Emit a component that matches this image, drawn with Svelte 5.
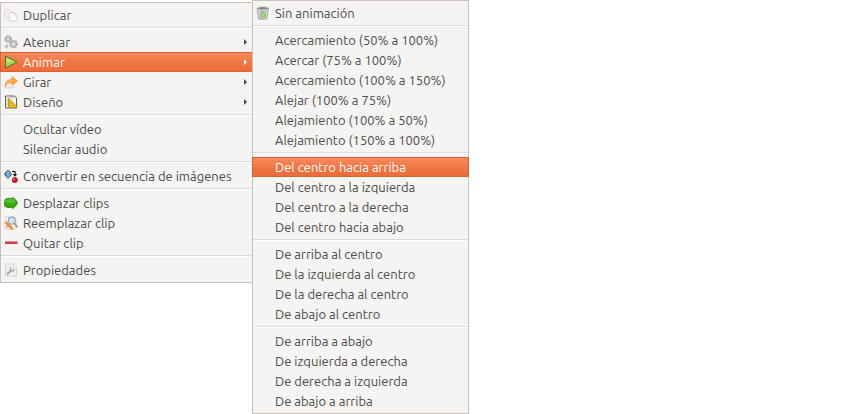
<script lang="ts">
	type Item = { label: string; icon?: string; submenu?: boolean };

	const clipMenu: Item[][] = [
		[{ label: 'Duplicar', icon: 'copy' }],
		[
			{ label: 'Atenuar', icon: 'gears', submenu: true },
			{ label: 'Animar', icon: 'play', submenu: true },
			{ label: 'Girar', icon: 'rotate', submenu: true },
			{ label: 'Diseño', icon: 'layout', submenu: true }
		],
		[{ label: 'Ocultar vídeo' }, { label: 'Silenciar audio' }],
		[{ label: 'Convertir en secuencia de imágenes', icon: 'convert' }],
		[
			{ label: 'Desplazar clips', icon: 'shift' },
			{ label: 'Reemplazar clip', icon: 'replace' },
			{ label: 'Quitar clip', icon: 'remove' }
		],
		[{ label: 'Propiedades', icon: 'properties' }]
	];

	const animateMenu: Item[][] = [
		[{ label: 'Sin animación', icon: 'trash' }],
		[
			{ label: 'Acercamiento (50% a 100%)' },
			{ label: 'Acercar (75% a 100%)' },
			{ label: 'Acercamiento (100% a 150%)' },
			{ label: 'Alejar (100% a 75%)' },
			{ label: 'Alejamiento (100% a 50%)' },
			{ label: 'Alejamiento (150% a 100%)' }
		],
		[
			{ label: 'Del centro hacia arriba' },
			{ label: 'Del centro a la izquierda' },
			{ label: 'Del centro a la derecha' },
			{ label: 'Del centro hacia abajo' }
		],
		[
			{ label: 'De arriba al centro' },
			{ label: 'De la izquierda al centro' },
			{ label: 'De la derecha al centro' },
			{ label: 'De abajo al centro' }
		],
		[
			{ label: 'De arriba a abajo' },
			{ label: 'De izquierda a derecha' },
			{ label: 'De derecha a izquierda' },
			{ label: 'De abajo a arriba' }
		]
	];

	let activeClip = $state('Animar');
	let activeAnimation = $state('Del centro hacia arriba');
</script>

{#snippet glyph(name: string | undefined)}
	<svg class="icon" viewBox="0 0 14 14" aria-hidden="true">
		{#if name === 'copy'}
			<path d="M1 1.500h5l2 2v6H1z" fill="#f4f4f3" stroke="#dedcd9" />
			<path d="M5.500 4.500h5l2.500 2.500v6H5.500z" fill="#fafafa" stroke="#d9d7d4" />
			<path d="M10.500 4.500V7H13" fill="none" stroke="#d9d7d4" />
		{:else if name === 'gears'}
			<circle cx="4" cy="4" r="3" fill="#ccc" stroke="#a2a2a2" stroke-width="1.500" stroke-dasharray="1.600 .8" />
			<circle cx="4" cy="4" r="1.300" fill="#f4f3f1" stroke="#aaa" stroke-width=".6" />
			<circle cx="9.500" cy="9" r="3.600" fill="#ccc" stroke="#a2a2a2" stroke-width="1.500" stroke-dasharray="1.700 .9" />
			<circle cx="9.500" cy="9" r="1.500" fill="#f4f3f1" stroke="#aaa" stroke-width=".6" />
			<circle cx="2.500" cy="11.500" r="1.400" fill="#ddd" stroke="#999" stroke-dasharray="1 .6" />
		{:else if name === 'play'}
			<path d="M1.500 1v12L13 7z" fill="#a9d14a" stroke="#4d7c12" stroke-linejoin="round" />
			<path d="M2.600 3v4.500l6.500-1.100z" fill="#cbe67f" />
		{:else if name === 'rotate'}
			<ellipse cx="6" cy="12.600" rx="5" ry="1" fill="#deddd9" />
			<path d="M1 12C1 7 3 4.500 8 4.500V1.500L13.500 6 8 10.500V7.800C4.500 7.500 2.500 9 1 12z" fill="#fba43c" stroke="#f2933a" stroke-width=".7" stroke-linejoin="round" />
			<path d="M2.500 8.500C4 6.200 6 5.500 9 5.500" fill="none" stroke="#ffc070" stroke-width=".9" />
		{:else if name === 'layout'}
			<path d="M1.500 1h9l2 2v10h-11z" fill="#f6f5ec" stroke="#64645e" />
			<path d="M3 3v8M5.500 2.500h4" stroke="#b7b7b1" stroke-width=".8" />
			<path d="M4.500 3v9.500h9z" fill="#edce25" stroke="#b8940c" />
			<path d="M6.500 7.500v3h3z" fill="#fff8cb" stroke="#a88604" stroke-width=".7" />
		{:else if name === 'convert'}
			<path d="M4 .8 7.500 5.200 4 9.600.500 5.200z" fill="#6c9bd1" stroke="#26527f" />
			<path d="M4 1v8.500" stroke="#b4d0ec" stroke-width=".8" />
			<path d="M8 2.500h3V6" fill="none" stroke="#171717" stroke-width="1.200" />
			<path d="M8.800 5h4.400L11 7.800z" fill="#171717" />
			<circle cx="10.800" cy="11" r="2.600" fill="#cf1c20" stroke="#950b10" stroke-width=".7" />
			<circle cx="10" cy="10.200" r=".8" fill="#ff9a94" />
		{:else if name === 'shift'}
			<path d="M1 3.500Q3 1.500 7 2.500L9 1.500Q12.500 4 13.700 6.800 12 10.500 9 12.500L7.500 11.500Q3 12 1 10.500Q-.4 7 1 3.500z" fill="#32a90d" stroke="#23840a" stroke-width=".7" />
			<path d="M1.500 4.200Q4 3 7.200 3.500L9 2.600Q11 4.200 12 6 7 7.500 1 6.500z" fill="#54c02c" />
		{:else if name === 'replace'}
			<path d="M1 .8h9l2 2v10.500H1z" fill="#f7f7f7" stroke="#d0d0ce" stroke-width=".8" />
			<path d="M1 6.500 2.500 5.500 8.500 11.500 8.500 13.500 6.800 13z" fill="#f7931e" stroke="#e67a28" stroke-width=".6" />
			<circle cx="7.800" cy="4.700" r="3.500" fill="#d1e4f5" stroke="#8fa8c6" stroke-width="1.200" />
			<path d="M10.300 7.300 13 10.800" stroke="#c58b55" stroke-width="1.800" stroke-linecap="round" />
			<path d="M2 11.500 4 9.500" stroke="#dc8078" stroke-width="1.500" />
		{:else if name === 'remove'}
			<rect x="1" y="5.500" width="12.500" height="2.600" rx=".5" fill="#c03b40" />
			<path d="M1.500 6h11.500" stroke="#de7777" stroke-width=".7" />
		{:else if name === 'properties'}
			<path d="M1.500 1h8l3 3v9h-11z" fill="#eeeeec" stroke="#d6d5d2" />
			<path d="M9.500 1v3h3" fill="#fff" stroke="#d6d5d2" stroke-width=".7" />
			<path d="M3.500 11 7 7.500" stroke="#a6a6a6" stroke-width="1.800" stroke-linecap="round" />
			<path d="M6.700 4.500Q5.500 7.500 8 8 10 8 10 5.800" fill="none" stroke="#a6a6a6" stroke-width="1.300" />
		{:else if name === 'trash'}
			<path d="M1 2.500 2.500 12.800Q6.800 14.400 11 12.800L12.500 2.500z" fill="#bfc0bd" stroke="#9b9c99" stroke-width=".7" />
			<path d="M2.800 4.500 3.800 12M11 4.500 10 12" stroke="#dededb" />
			<ellipse cx="6.800" cy="2.300" rx="5.800" ry="1.600" fill="#858682" stroke="#cdcecb" />
			<path d="M4.800 9 6 6.500h2M9 7.500 9.500 10 7.500 11M6.200 11.200 4.800 9.500" fill="none" stroke="#7ad24e" stroke-width="1.600" />
		{/if}
	</svg>
{/snippet}

{#snippet menu(groups: Item[][], active: string, label: string, select: (name: string) => void)}
	<div class="menu" role="menu" aria-label={label}>
		{#each groups as group, i}
			{#if i > 0}
				<hr />
			{/if}
			{#each group as item}
				<button
					type="button"
					role="menuitem"
					class="item"
					class:active={item.label === active}
					aria-haspopup={item.submenu ? 'menu' : undefined}
					onclick={() => select(item.label)}
				>
					{@render glyph(item.icon)}
					<span class="label">{item.label}</span>
					{#if item.submenu}
						<svg class="arrow" viewBox="0 0 3 6" aria-hidden="true">
							<path d="M0 0v6l3-3z" fill="currentColor" />
						</svg>
					{/if}
				</button>
			{/each}
		{/each}
	</div>
{/snippet}

<div class="menus">
	<div class="primary">
		{@render menu(clipMenu, activeClip, 'Clip', (name) => (activeClip = name))}
	</div>
	<div class="secondary">
		{@render menu(animateMenu, activeAnimation, 'Animar', (name) => (activeAnimation = name))}
	</div>
</div>

<style>
	:global(body) {
		background: #fff;
	}

	.menus {
		display: flex;
		align-items: flex-start;
		font-family: Ubuntu, Lato, 'Noto Sans', sans-serif;
		font-size: 13px;
		color: #4c4c4c;
	}

	.primary {
		min-width: 253px;
		padding-top: 2px;
	}

	.secondary {
		min-width: 217px;
		margin-left: -1px;
	}

	.menu {
		padding: 2px 0;
		border: 1px solid #cdc0b8;
		background: #f5f4f2;
	}

	.item {
		display: flex;
		align-items: center;
		gap: 5px;
		box-sizing: border-box;
		width: calc(100% + 2px);
		height: 20px;
		margin: 0 -1px;
		padding: 0 6px 0 4px;
		border: 0;
		background: none;
		color: inherit;
		font: inherit;
		line-height: 20px;
		text-align: left;
		white-space: nowrap;
	}

	.item.active {
		background: linear-gradient(#f98b60, #f07744 50%, #ea6b38);
		box-shadow: inset 0 0 0 1px #e0602f;
		color: #fff;
	}

	.icon {
		flex: none;
		width: 14px;
		height: 14px;
	}

	.label {
		flex: 1;
	}

	.arrow {
		flex: none;
		width: 3px;
		height: 6px;
	}

	hr {
		height: 1px;
		margin: 2px 0 3px;
		border: 0;
		border-top: 1px solid #dfdcd8;
		background: #fff;
	}
</style>
